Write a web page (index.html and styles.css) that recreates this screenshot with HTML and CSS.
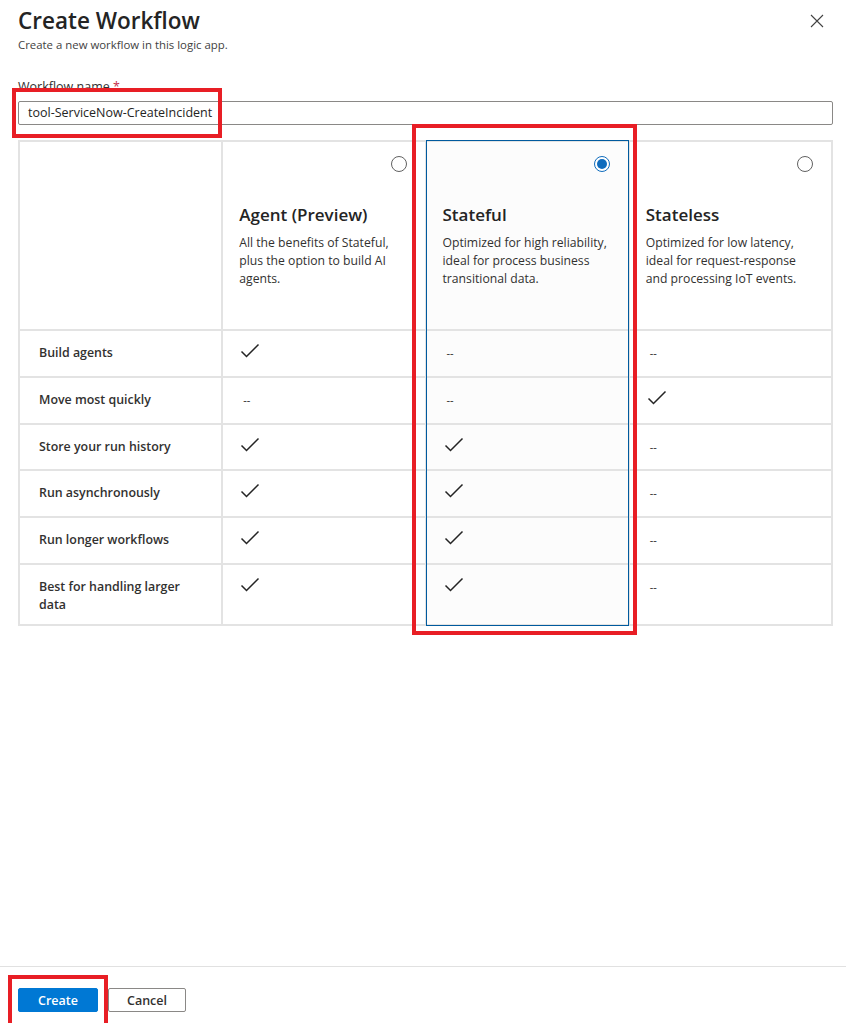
FILE: index.html
```html
<!DOCTYPE html>
<html lang="en">
<head>
<meta charset="utf-8">
<title>Create Workflow</title>
<link rel="stylesheet" href="styles.css">
</head>
<body>
<div class="page">
  <main class="main">
    <header class="head">
      <div class="head-text">
        <h1 class="title">Create Workflow</h1>
        <p class="subtitle">Create a new workflow in this logic app.</p>
      </div>
      <button class="close" aria-label="Close">
        <svg width="14" height="14" viewBox="0 0 14 14"><path d="M1 1 L13 13 M13 1 L1 13" stroke="#424242" stroke-width="1.1" fill="none"/></svg>
      </button>
    </header>

    <div class="field">
      <label class="label">Workflow name <span class="req">*</span></label>
      <div class="input">tool-ServiceNow-CreateIncident</div>
      <div class="mark mark-input"></div>
    </div>

    <div class="table-wrap">
      <div class="grid">
        <div class="cell head-cell"></div>
        <div class="cell head-cell">
          <span class="radio"></span>
          <div class="opt-title">Agent (Preview)</div>
          <div class="opt-desc">All the benefits of Stateful, plus the option to build AI agents.</div>
        </div>
        <div class="cell head-cell sel">
          <span class="radio on"></span>
          <div class="opt-title">Stateful</div>
          <div class="opt-desc">Optimized for high reliability, ideal for process business transitional data.</div>
        </div>
        <div class="cell head-cell">
          <span class="radio"></span>
          <div class="opt-title">Stateless</div>
          <div class="opt-desc">Optimized for low latency, ideal for request-response and processing IoT events.</div>
        </div>

        <div class="cell rl">Build agents</div>
        <div class="cell"><svg class="chk" viewBox="0 0 20 20"><path d="M1.5 8.5 L6.5 13.5 L18.5 1.5"/></svg></div>
        <div class="cell sel"><span class="dash">--</span></div>
        <div class="cell"><span class="dash">--</span></div>

        <div class="cell rl">Move most quickly</div>
        <div class="cell"><span class="dash">--</span></div>
        <div class="cell sel"><span class="dash">--</span></div>
        <div class="cell"><svg class="chk" viewBox="0 0 20 20"><path d="M1.5 8.5 L6.5 13.5 L18.5 1.5"/></svg></div>

        <div class="cell rl">Store your run history</div>
        <div class="cell"><svg class="chk" viewBox="0 0 20 20"><path d="M1.5 8.5 L6.5 13.5 L18.5 1.5"/></svg></div>
        <div class="cell sel"><svg class="chk" viewBox="0 0 20 20"><path d="M1.5 8.5 L6.5 13.5 L18.5 1.5"/></svg></div>
        <div class="cell"><span class="dash">--</span></div>

        <div class="cell rl">Run asynchronously</div>
        <div class="cell"><svg class="chk" viewBox="0 0 20 20"><path d="M1.5 8.5 L6.5 13.5 L18.5 1.5"/></svg></div>
        <div class="cell sel"><svg class="chk" viewBox="0 0 20 20"><path d="M1.5 8.5 L6.5 13.5 L18.5 1.5"/></svg></div>
        <div class="cell"><span class="dash">--</span></div>

        <div class="cell rl">Run longer workflows</div>
        <div class="cell"><svg class="chk" viewBox="0 0 20 20"><path d="M1.5 8.5 L6.5 13.5 L18.5 1.5"/></svg></div>
        <div class="cell sel"><svg class="chk" viewBox="0 0 20 20"><path d="M1.5 8.5 L6.5 13.5 L18.5 1.5"/></svg></div>
        <div class="cell"><span class="dash">--</span></div>

        <div class="cell rl">Best for handling larger data</div>
        <div class="cell"><svg class="chk" viewBox="0 0 20 20"><path d="M1.5 8.5 L6.5 13.5 L18.5 1.5"/></svg></div>
        <div class="cell sel"><svg class="chk" viewBox="0 0 20 20"><path d="M1.5 8.5 L6.5 13.5 L18.5 1.5"/></svg></div>
        <div class="cell"><span class="dash">--</span></div>
      </div>
      <div class="sel-frame"></div>
      <div class="mark mark-col"></div>
    </div>
  </main>

  <footer class="foot">
    <button class="btn primary">Create</button>
    <button class="btn">Cancel</button>
    <div class="mark mark-btn"></div>
  </footer>
</div>
</body>
</html>
```

FILE: styles.css
```css
* { box-sizing: border-box; }
html, body { margin: 0; padding: 0; background: #fff; }
body {
  font-family: "Open Sans", "Noto Sans", "Liberation Sans", sans-serif;
  color: #323130;
}
.page {
  height: 1023px;
  display: flex;
  flex-direction: column;
  overflow: hidden;
}
.main {
  flex: 1;
  padding: 5px 13px 0 18px;
}
.head {
  display: flex;
  justify-content: space-between;
  align-items: flex-start;
}
.title {
  margin: 0;
  font-size: 22.5px;
  line-height: 32px;
  font-weight: 600;
  color: #242424;
}
.subtitle {
  margin: 0;
  font-size: 11.4px;
  line-height: 16px;
  color: #424242;
}
.close {
  border: 0;
  background: none;
  padding: 0;
  margin: 4px 4px 0 0;
  width: 24px;
  height: 24px;
  display: flex;
  align-items: center;
  justify-content: center;
}
.field {
  position: relative;
  margin-top: 24px;
}
.label {
  display: block;
  font-size: 12.5px;
  line-height: 20px;
  color: #323130;
}
.req { color: #c4314b; }
.input {
  margin-top: 4px;
  height: 24px;
  border: 1px solid #8a8886;
  border-radius: 2px;
  padding: 0 9px;
  font-size: 12.5px;
  line-height: 22px;
  color: #242424;
}
.mark {
  position: absolute;
  border: 4.5px solid #e81e25;
  pointer-events: none;
}
.mark-input { left: -6px; top: 11px; width: 210px; height: 50px; }

.table-wrap {
  position: relative;
  margin-top: 15px;
}
.grid {
  display: grid;
  grid-template-columns: repeat(4, 1fr);
  gap: 2px;
  padding: 2px;
  background: #e3e3e3;
}
.cell {
  background: #fff;
  min-height: 44.8px;
  padding: 13px 17px 10px;
  font-size: 12.4px;
  line-height: 18px;
}
.cell.sel { background: #fcfcfc; }
.rl {
  font-weight: 600;
  padding-left: 19px;
  color: #323130;
}
.head-cell {
  min-height: 187px;
  padding: 61px 15px 10px 16px;
  position: relative;
}
.radio {
  position: absolute;
  top: 14px;
  right: 18px;
  width: 16px;
  height: 16px;
  border: 1px solid #616161;
  border-radius: 50%;
  background: #fff;
}
.radio.on {
  border-color: #0f6cbd;
}
.radio.on::after {
  content: "";
  position: absolute;
  left: 2px;
  top: 2px;
  width: 10px;
  height: 10px;
  border-radius: 50%;
  background: #0f6cbd;
}
.opt-title {
  font-size: 17px;
  line-height: 24px;
  font-weight: 600;
  color: #242424;
  margin-bottom: 7px;
}
.opt-desc {
  font-size: 12.2px;
  line-height: 18px;
  color: #323130;
}
.dash {
  display: inline-block;
  padding-left: 3px;
  font-size: 11px;
  color: #242424;
}
.chk {
  display: block;
  width: 20px;
  height: 20px;
  margin-top: -1px;
  fill: none;
  stroke: #242424;
  stroke-width: 1.5;
}
.sel-frame {
  position: absolute;
  top: 0;
  bottom: 0;
  left: 50%;
  width: 25%;
  border: 1px solid #005a9e;
  pointer-events: none;
}
.mark-col { left: 394px; top: -16px; width: 225px; height: 511px; }

.foot {
  position: relative;
  flex: none;
  border-top: 1px solid #e1e1e1;
  padding: 21px 18px 11px;
  display: flex;
  gap: 10px;
}
.btn {
  height: 24px;
  min-width: 78px;
  padding: 0 12px;
  border: 1px solid #8a8886;
  border-radius: 2px;
  background: #fff;
  font-family: inherit;
  font-size: 12.5px;
  font-weight: 600;
  color: #323130;
}
.btn.primary {
  width: 80px;
  background: #0078d4;
  border-color: #0078d4;
  color: #fff;
}
.mark-btn { left: 8px; top: 8px; width: 100px; height: 52px; }
```
